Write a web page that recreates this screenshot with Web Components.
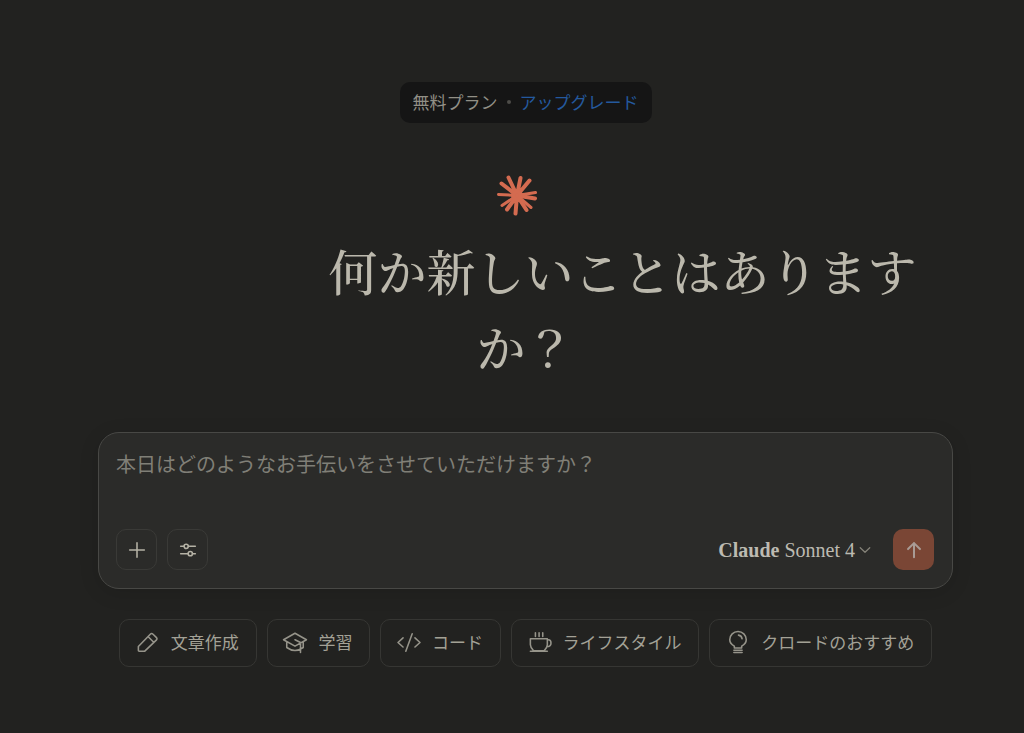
<!DOCTYPE html>
<html lang="ja">
<head>
<meta charset="UTF-8">
<meta name="viewport" content="width=device-width, initial-scale=1.0">
<title>Claude</title>
<style>
    body {
        margin: 0;
        background-color: #222220;
        color: #aaa89d;
        font-family: "Noto Sans CJK JP", sans-serif;
        font-size: 17px;
    }
</style>
</head>
<body>
<chat-home>
    <plan-badge slot="plan" plan="無料プラン" accion="アップグレード"></plan-badge>
    <chat-greeting slot="greeting">何か新しいことはありますか？</chat-greeting>
    <chat-composer slot="composer" placeholder="本日はどのようなお手伝いをさせていただけますか？" marca="Claude" modelo="Sonnet 4"></chat-composer>
    <suggestion-chip icono="pencil">文章作成</suggestion-chip>
    <suggestion-chip icono="study">学習</suggestion-chip>
    <suggestion-chip icono="code">コード</suggestion-chip>
    <suggestion-chip icono="cup">ライフスタイル</suggestion-chip>
    <suggestion-chip icono="bulb">クロードのおすすめ</suggestion-chip>
</chat-home>

<script>
const ICONS = {
    plus: '<path d="M12 4v16M4 12h16"/>',
    sliders: '<path d="M4 8h3.5M12.5 8H20M4 16h8M17 16h3"/><circle cx="10" cy="8" r="2.3"/><circle cx="14.5" cy="16" r="2.3"/>',
    arrow: '<path d="M12 20V4.5M5.5 11L12 4.5l6.5 6.5"/>',
    chevron: '<path d="M2.5 7.5l9.5 9 9.5-9"/>',
    pencil: '<path d="M1.5 17L14.5 3.5q1.5-1.5 3 0l3.5 3.500q1.5 1.500 0 3L8.500 22H2.500q-1 0-1-1zM12 6l6.500 6.500"/>',
    study: '<path d="M12 2.500L24.500 9.500l-12.500 7L-.5 9.500zM3 12v6q9 6.500 18 0v-6.500M12 9.500l6 3v11"/>',
    code: '<path d="M5.500 7.500L0 12.500l5.500 5M18.500 7.500l5.500 5-5.500 5M15.500 3L8.500 22"/>',
    cup: '<path d="M1.500 8.500h18.500v6.500c0 2.500-1.500 4.500-3.500 6.500H5c-2-2-3.500-4-3.500-6.500zM20 9.500h1q3 0 3 3.500c0 2.500-2 4-4.500 4M1.500 22h18.500M7 2v4M11 2v4M15 2v4"/>',
    bulb: '<path d="M8 18.500v-2C4.500 14.500 3 12 3 9.500a9 9 0 0 1 18 0c0 2.500-1.500 5-5 7v2zM12.500 4.500q3.500.500 4 4M7.500 21h9M7.500 23.500h9"/>'
};

const icon = (name, grosor = 1.7) => /* html */`
    <svg viewBox="0 0 24 24" fill="none" stroke="currentColor" stroke-width="${grosor}" stroke-linecap="round" stroke-linejoin="round" overflow="visible" aria-hidden="true">${ICONS[name]}</svg>`;

class ChatHome extends HTMLElement {
    constructor() {
        super();
        this.attachShadow({ mode: 'open' });
    }

    connectedCallback() {
        this.shadowRoot.innerHTML = /* html */`
        <style>
            :host {
                display: block;
                box-sizing: border-box;
                min-height: 100vh;
                padding: 82px 71px 24px 98px;
            }
            main {
                display: flex;
                flex-direction: column;
                align-items: center;
                max-width: 855px;
                margin: 0 auto;
            }
            .composer {
                align-self: stretch;
                margin: 48px 0 30px;
            }
            .chips {
                align-self: stretch;
                display: flex;
                flex-wrap: wrap;
                gap: 10px;
                padding: 0 21px;
            }
        </style>
        <main>
            <slot name="plan"></slot>
            <slot name="greeting"></slot>
            <div class="composer"><slot name="composer"></slot></div>
            <div class="chips"><slot></slot></div>
        </main>
        `;
    }
}

class PlanBadge extends HTMLElement {
    constructor() {
        super();
        this.attachShadow({ mode: 'open' });
    }

    connectedCallback() {
        this.shadowRoot.innerHTML = /* html */`
        <style>
            :host {
                display: flex;
                align-items: center;
                gap: 9px;
                padding: 7px 13px 9px;
                border-radius: 10px;
                background-color: #151515;
                color: #918f86;
                line-height: 25px;
            }
            .dot {
                inline-size: 4px;
                block-size: 4px;
                border-radius: 50%;
                background-color: #4d4c48;
            }
            a {
                color: #24599e;
                text-decoration: none;
            }
        </style>
        <span>${this.getAttribute('plan')}</span>
        <span class="dot"></span>
        <a href="#upgrade">${this.getAttribute('accion')}</a>
        `;
    }
}

class ChatGreeting extends HTMLElement {
    constructor() {
        super();
        this.attachShadow({ mode: 'open' });
    }

    connectedCallback() {
        this.shadowRoot.innerHTML = /* html */`
        <style>
            :host {
                display: flex;
                flex-direction: column;
                align-items: center;
                max-width: 813px;
                margin-top: 51px;
            }
            svg {
                inline-size: 42px;
                block-size: 42px;
                margin-right: 18px;
                stroke: #d46b50;
            }
            h1 {
                margin: 16px 0 0;
                color: #bbb8ac;
                font-family: "Noto Serif CJK JP", "Noto Sans CJK JP", serif;
                font-size: 49px;
                font-weight: 500;
                line-height: 76px;
                text-align: center;
                text-indent: 194px;
            }
        </style>
        <svg viewBox="0 0 42 42" fill="none" stroke-width="4" stroke-linecap="round" aria-hidden="true">
            <path d="M21 21.5L12.500 3.500M21 21.5L24.500 4M21 21.5L33.500 6.500M21 21.5L39 24.500M21 21.5L30.500 36M21 21.5L19.500 39.500M21 21.5L11 35.500M21 21.5L5.500 9.500"/>
            <path stroke-width="3" d="M21 21.5L2.500 20.500M21 21.5L39.500 18.500M21 21.5L35 33.500M21 21.5L6 31.500"/>
            <circle cx="21" cy="21.5" r="4"/>
        </svg>
        <h1><slot></slot></h1>
        `;
    }
}

class ChatComposer extends HTMLElement {
    constructor() {
        super();
        this.attachShadow({ mode: 'open' });
    }

    connectedCallback() {
        const placeholder = this.getAttribute('placeholder');
        this.shadowRoot.innerHTML = /* html */`
        <style>
            * {
                box-sizing: border-box;
            }
            :host {
                display: block;
            }
            form {
                display: flex;
                flex-direction: column;
                gap: 23px;
                padding: 17px 18px 18px 17px;
                border: 1px solid #484845;
                border-radius: 21px;
                background-color: #2b2b29;
                box-shadow: 0 4px 20px rgba(0, 0, 0, 0.12);
            }
            textarea {
                display: block;
                inline-size: 100%;
                padding: 0;
                border: 0;
                outline: 0;
                resize: none;
                background: none;
                color: #c4c2b8;
                font: inherit;
                font-size: 20px;
                line-height: 28px;
            }
            textarea::placeholder {
                color: #807f77;
                opacity: 1;
            }
            .tools {
                display: flex;
                align-items: center;
                gap: 10px;
            }
            button {
                display: flex;
                align-items: center;
                justify-content: center;
                padding: 0;
                border: 0;
                background: none;
                color: #b5b2a5;
                font: inherit;
                cursor: pointer;
            }
            .tool, .send {
                inline-size: 41px;
                block-size: 41px;
                border-radius: 10px;
            }
            .tool {
                border: 1px solid #3a3a37;
            }
            .tool svg, .send svg {
                inline-size: 22px;
                block-size: 22px;
            }
            .model {
                gap: 4px;
                margin-left: auto;
                margin-right: 12px;
                color: #bcbab1;
                font-family: "Liberation Serif", serif;
                font-size: 20px;
                line-height: 28px;
            }
            .model svg {
                inline-size: 12px;
                block-size: 12px;
                color: #858379;
            }
            .send {
                background-color: #7a4635;
                color: #a99b95;
            }
        </style>
        <form>
            <textarea rows="2" aria-label="${placeholder}" placeholder="${placeholder}"></textarea>
            <div class="tools">
                <button class="tool" type="button" aria-label="追加">${icon('plus')}</button>
                <button class="tool" type="button" aria-label="ツール">${icon('sliders')}</button>
                <button class="model" type="button" aria-haspopup="listbox"><span><b>${this.getAttribute('marca')}</b> ${this.getAttribute('modelo')}</span>${icon('chevron', 2.5)}</button>
                <button class="send" type="button" aria-label="送信">${icon('arrow', 2.2)}</button>
            </div>
        </form>
        `;
    }
}

class SuggestionChip extends HTMLElement {
    constructor() {
        super();
        this.attachShadow({ mode: 'open' });
    }

    connectedCallback() {
        this.shadowRoot.innerHTML = /* html */`
        <style>
            :host {
                display: block;
                flex: 1 0 auto;
            }
            button {
                display: flex;
                align-items: center;
                justify-content: center;
                gap: 12px;
                inline-size: 100%;
                padding: 10px 16px 12px;
                border: 1px solid #363633;
                border-radius: 10px;
                background: none;
                color: #a3a196;
                font: inherit;
                line-height: 24px;
                white-space: nowrap;
                cursor: pointer;
            }
            svg {
                flex: none;
                inline-size: 22px;
                block-size: 22px;
                color: #96948a;
            }
        </style>
        <button type="button">${icon(this.getAttribute('icono'))}<span><slot></slot></span></button>
        `;
    }
}

customElements.define('chat-home', ChatHome);
customElements.define('plan-badge', PlanBadge);
customElements.define('chat-greeting', ChatGreeting);
customElements.define('chat-composer', ChatComposer);
customElements.define('suggestion-chip', SuggestionChip);
</script>
</body>
</html>
